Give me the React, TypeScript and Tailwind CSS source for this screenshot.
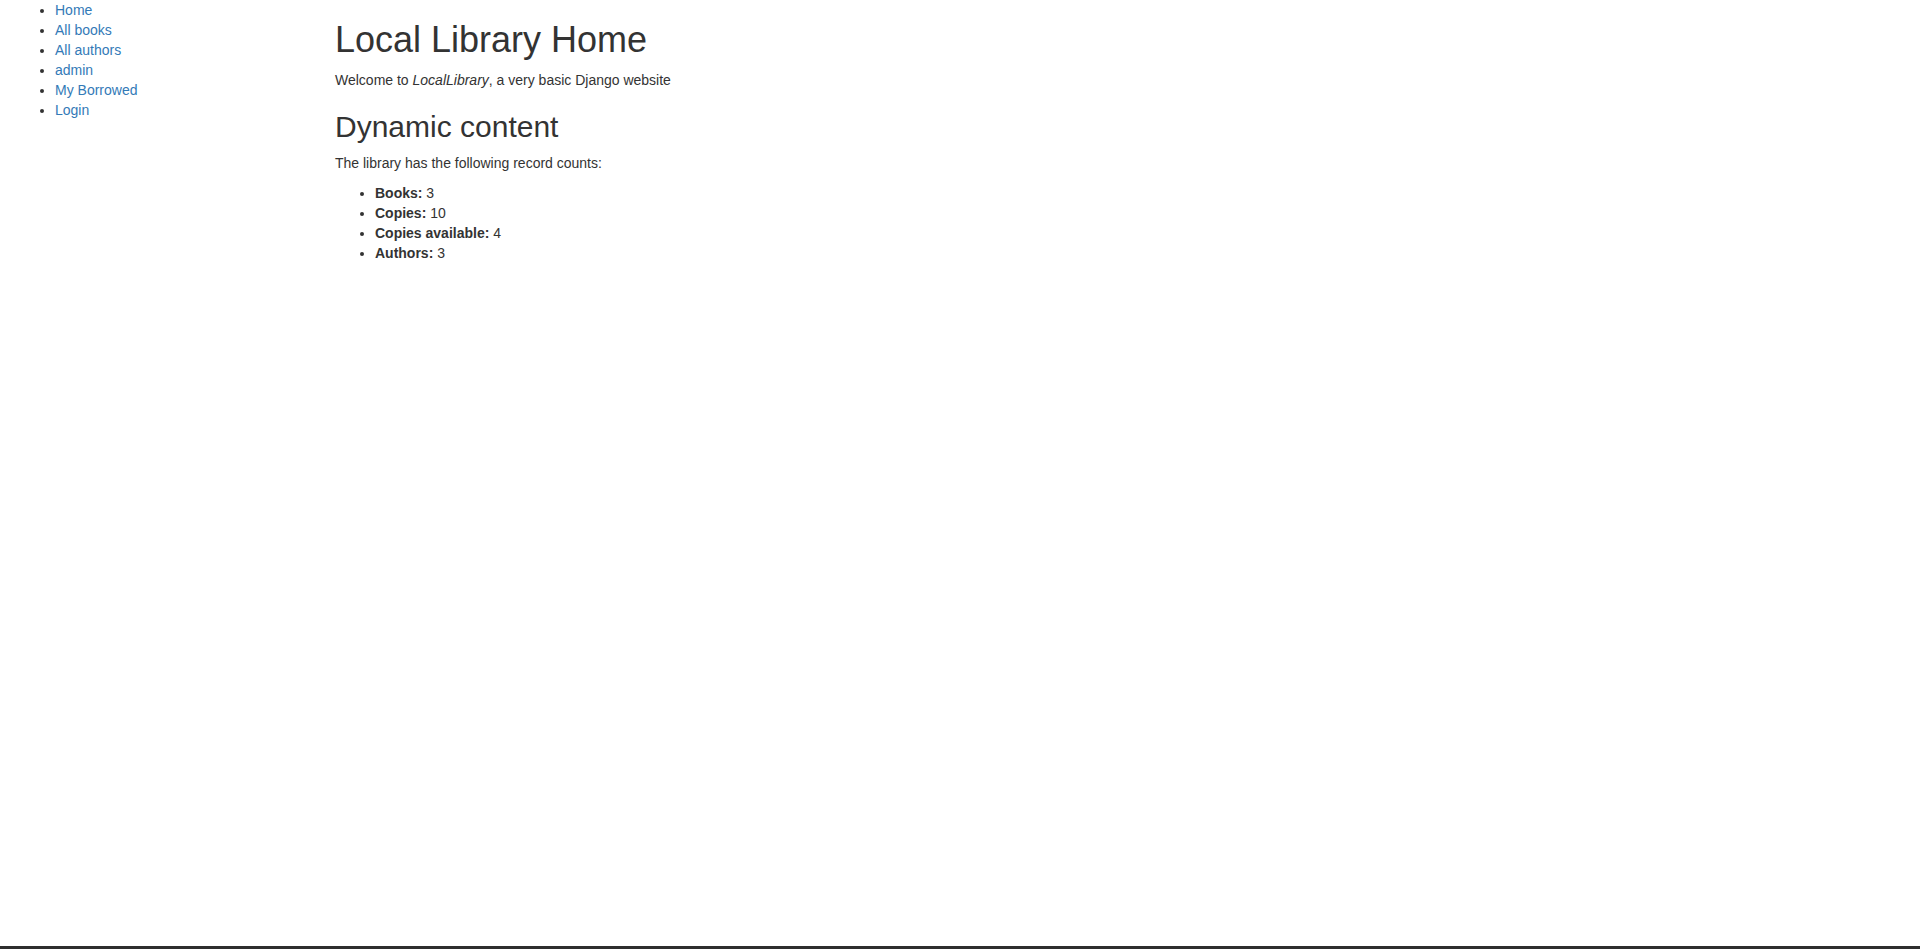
const navLinks = ["Home", "All books", "All authors", "admin", "My Borrowed", "Login"];

const counts = [
  { label: "Books:", value: 3 },
  { label: "Copies:", value: 10 },
  { label: "Copies available:", value: 4 },
  { label: "Authors:", value: 3 },
];

export default function App() {
  return (
    <div className="flex min-h-[949px] flex-col bg-white font-['Liberation_Sans',Arial,sans-serif] text-[14px] leading-[20px] text-[#333]">
      <div className="flex-1 px-[15px]">
        <div className="-mx-[15px] flex">
          <div className="w-1/6 px-[15px]">
            <ul className="mb-[10px] list-disc pl-[40px]">
              {navLinks.map((link) => (
                <li key={link}>
                  <a href="#" className="text-[#337ab7] hover:underline">
                    {link}
                  </a>
                </li>
              ))}
            </ul>
          </div>

          <div className="w-5/6 px-[15px]">
            <h1 className="mt-[20px] mb-[10px] text-[36px] leading-[1.1] font-medium">Local Library Home</h1>
            <p className="mb-[10px]">
              Welcome to <em>LocalLibrary</em>, a very basic Django website
            </p>

            <h2 className="mt-[20px] mb-[10px] text-[30px] leading-[1.1] font-medium">Dynamic content</h2>
            <p className="mb-[10px]">The library has the following record counts:</p>
            <ul className="mb-[10px] list-disc pl-[40px]">
              {counts.map((item) => (
                <li key={item.label}>
                  <strong className="font-bold">{item.label}</strong> {item.value}
                </li>
              ))}
            </ul>
          </div>
        </div>
      </div>
      <div className="h-[3px] bg-[#2f2f2f]" />
    </div>
  );
}
